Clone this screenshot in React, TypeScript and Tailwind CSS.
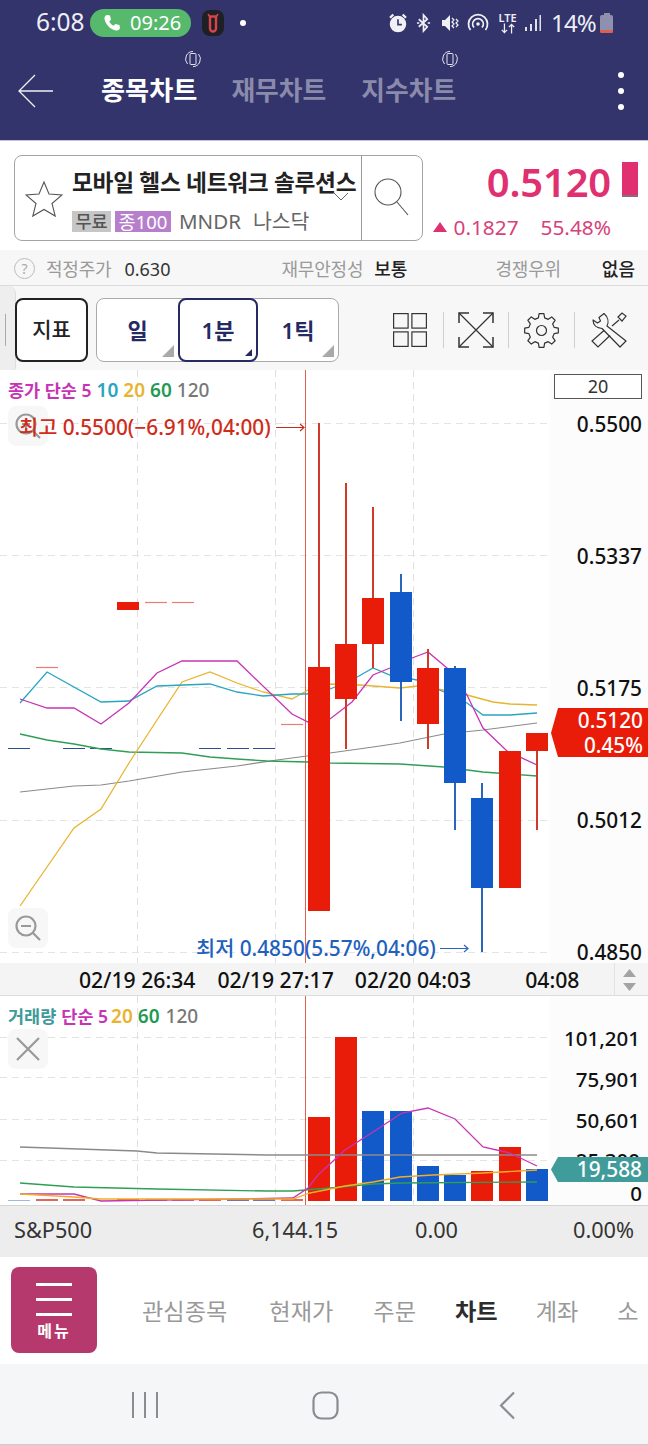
import React from "react";

const FONT = { fontFamily: '"Noto Sans", "Noto Sans CJK KR", sans-serif' };

const candles: { x: number; c: string; wt: number; t: number; b: number; wb: number }[] = [
  { x: 319, c: "#e81c08", wt: 423, t: 667, b: 911, wb: 911 },
  { x: 346, c: "#e81c08", wt: 483, t: 644, b: 699, wb: 749 },
  { x: 373, c: "#e81c08", wt: 507, t: 598, b: 644, wb: 668 },
  { x: 401, c: "#1259c9", wt: 574, t: 592, b: 682, wb: 721 },
  { x: 428, c: "#e81c08", wt: 649, t: 668, b: 724, wb: 749 },
  { x: 455, c: "#1259c9", wt: 666, t: 668, b: 783, wb: 830 },
  { x: 482, c: "#1259c9", wt: 783, t: 798, b: 888, wb: 952 },
  { x: 510, c: "#e81c08", wt: 751, t: 751, b: 888, wb: 888 },
  { x: 537, c: "#e81c08", wt: 733, t: 733, b: 751, wb: 830 },
];

const volBars = [
  { x: 319, c: "#e81c08", t: 1117 },
  { x: 346, c: "#e81c08", t: 1037 },
  { x: 373, c: "#1259c9", t: 1111 },
  { x: 401, c: "#1259c9", t: 1111 },
  { x: 428, c: "#1259c9", t: 1166 },
  { x: 455, c: "#1259c9", t: 1175 },
  { x: 482, c: "#e81c08", t: 1171 },
  { x: 510, c: "#e81c08", t: 1147 },
  { x: 537, c: "#1259c9", t: 1169 },
];

const priceLines = [
  { c: "#8a8a8a", w: 1.2, p: "20,792 74,786 101,785 129,781 182,772 237,766 277,760 307,756 330,753 373,747 400,743 444,734 483,730 537,723" },
  { c: "#2f9e57", w: 1.3, p: "20,734 47,740 74,744 101,749 129,752 182,753 210,757 237,759 267,761 308,762 330,763 400,764 444,767 483,772 537,776" },
  { c: "#e8b430", w: 1.3, p: "20,906 47,867 74,828 101,809 129,763 157,720 182,682 210,672 237,683 263,692 292,699 308,690 330,684 360,685 400,688 417,686 443,690 467,695 493,702 510,704 537,705" },
  { c: "#2aa5c0", w: 1.3, p: "20,703 47,672 101,702 129,701 157,686 210,684 237,692 263,696 292,694 307,694 330,689 352,680 373,668 390,675 417,680 444,692 467,703 483,715 510,715 537,713" },
  { c: "#c733b5", w: 1.3, p: "20,699 47,708 74,708 101,724 129,703 157,673 182,661 237,661 292,714 308,722 330,719 352,702 373,675 390,668 412,658 428,652 447,668 467,695 483,728 507,751 537,765" },
];

const volLines = [
  { c: "#8a8a8a", w: 1.5, p: "20,1147 137,1151 157,1153 267,1155 537,1155" },
  { c: "#2f9e57", w: 1.3, p: "20,1183 74,1187 157,1189 267,1191 293,1191 330,1188 373,1184 400,1183 537,1182" },
  { c: "#c733b5", w: 1.3, p: "20,1194 74,1194 101,1201 293,1198 308,1188 318,1175 345,1150 373,1132 402,1113 428,1108 455,1119 483,1147 510,1153 537,1166" },
  { c: "#f0ae28", w: 1.3, p: "20,1194 74,1197 101,1199 293,1199 310,1193 345,1186 373,1182 400,1177 433,1175 483,1173 537,1170" },
];

function gearPath() {
  const pts: string[] = [];
  const n = 8;
  const cx = 17.5;
  const cy = 17.5;
  for (let i = 0; i < n; i++) {
    const a = (i * 2 * Math.PI) / n - Math.PI / 2;
    const d = Math.PI / n;
    const add = (r: number, t: number) => pts.push(`${(cx + r * Math.cos(t)).toFixed(2)} ${(cy + r * Math.sin(t)).toFixed(2)}`);
    add(13, a - d * 0.62);
    add(17, a - d * 0.36);
    add(17, a + d * 0.36);
    add(13, a + d * 0.62);
  }
  return "M" + pts.join("L") + "Z";
}

function RotateIcon() {
  return (
    <svg width="18" height="18" viewBox="0 0 18 18" fill="none" stroke="#e4e4f0" strokeWidth="1">
      <rect x="6" y="3.500" width="6" height="11" rx="1" />
      <path d="M3.500 14A7.600 7.600 0 0 1 9 1.400M14.500 4A7.600 7.600 0 0 1 9 16.600" />
    </svg>
  );
}

function Corner({ dark }: { dark?: boolean }) {
  return (
    <svg className="absolute bottom-[4px] right-[4px]" width="12" height="12" viewBox="0 0 12 12">
      <path d={dark ? "M12 5V12H5Z" : "M12 0V12H0Z"} fill={dark ? "#262a63" : "#a9a9a9"} />
    </svg>
  );
}

function Sep() {
  return <div className="w-px h-[36px] bg-[#cfcfcf]" />;
}

export default function App() {
  return (
    <div className="w-[648px] h-[1445px] bg-white overflow-hidden flex flex-col" style={FONT}>
      {/* header */}
      <div className="h-[141px] bg-[#33346b] shrink-0 flex flex-col border-b border-[#c3c6d8]">
        <div className="h-[45px] relative flex items-center pl-[36px] pr-[35px] text-[#eeeef5]">
          <span className="text-[24.500px] leading-none w-[54px]">6:08</span>
          <div className="h-[28px] w-[101px] rounded-full bg-[#56b96c] flex items-center pl-[12px] gap-[8px]">
            <svg width="20" height="20" viewBox="0 0 24 24" fill="#ffffff">
              <path d="M6.600 2.500l3 .6 1.300 5-2.200 1.800c1 2.400 2.900 4.300 5.300 5.400l1.900-2.200 5 1.300.6 3c.1 2.300-2.300 4.100-4.600 3.600C10.200 19.700 4.300 13.800 3 7.100 2.500 4.800 4.300 2.400 6.600 2.500z" />
            </svg>
            <span className="text-[20px] leading-none text-white">09:26</span>
          </div>
          <div className="ml-[11px] w-[22px] h-[26px] rounded-[8px] bg-[#1f1f26] flex items-center justify-center">
            <svg width="12" height="20" viewBox="0 0 12 20" fill="none" stroke="#d8444c" strokeWidth="2.400">
              <path d="M3 3.500h6v12a3 3 0 0 1-6 0z" />
              <path d="M1 1l2 3M11 1L9 4" strokeWidth="1.500" />
            </svg>
          </div>
          <div className="ml-[16px] w-[6px] h-[6px] rounded-full bg-white" />
          <div className="ml-auto flex items-center">
            <svg width="20" height="22" viewBox="0 0 18 20" fill="#f0f0f5">
              <circle cx="9" cy="11" r="7.500" />
              <path d="M1 4.500L4 1.500 5.500 3 2.500 6zM17 4.500L14 1.500 12.500 3 15.500 6z" />
              <path d="M9 6.500V11.500H12.500" stroke="#33346b" strokeWidth="1.500" fill="none" />
            </svg>
            <svg className="ml-[8px]" width="15" height="20" viewBox="0 0 16 20" fill="none" stroke="#f0f0f5" strokeWidth="1.800">
              <path d="M3 6l9 8-4 4.500V1.500l4 4.500-9 8" />
              <path d="M1 10h2.500M12.500 10h2.500" />
            </svg>
            <svg className="ml-[10px]" width="18" height="20" viewBox="0 0 18 20" fill="#f0f0f5">
              <path d="M1 7h3l5-5v16l-5-5H1z" />
              <path d="M11 5l2 2-2 2 2 2-2 2 2 2M15 6l2 2-2 2 2 2-2 2" stroke="#f0f0f5" strokeWidth="1.200" fill="none" />
            </svg>
            <svg className="ml-[8px]" width="22" height="20" viewBox="0 0 22 20" fill="none" stroke="#f0f0f5" strokeWidth="1.800">
              <path d="M3.500 17A9.500 9.500 0 1 1 18.500 17" />
              <path d="M7 14.500A5.300 5.300 0 1 1 15 14.500" />
              <circle cx="11" cy="11" r="1.800" fill="#f0f0f5" stroke="none" />
            </svg>
            <div className="ml-[9px] flex flex-col items-center w-[19px]">
              <span className="text-[11px] leading-[11px] font-semibold">LTE</span>
              <svg width="16" height="11" viewBox="0 0 18 11" fill="none" stroke="#f0f0f5" strokeWidth="1.400">
                <path d="M5 0v10M2 7l3 3 3-3M13 11V1M10 4l3-3 3 3" />
              </svg>
            </div>
            <svg className="ml-[8px]" width="16" height="18" viewBox="0 0 16 18" fill="#e0e0ea">
              <rect x="0" y="13" width="2" height="4" />
              <rect x="5" y="10" width="2" height="7" />
              <rect x="10" y="5" width="2" height="12" />
              <rect x="14.500" y="1" width="1.500" height="16" />
            </svg>
            <span className="ml-[10px] text-[24px] leading-none tracking-[-0.8px] w-[45px] whitespace-nowrap">14%</span>
            <div className="ml-[4px] flex flex-col items-center">
              <div className="w-[6px] h-[2px] bg-[#8f90ae]" />
              <div className="relative w-[13px] h-[18px] rounded-[2px] bg-[#8f90ae] overflow-hidden">
                <div className="absolute left-0 right-0 bottom-0 h-[3px] bg-[#e0604f]" />
              </div>
            </div>
          </div>
        </div>
        <div className="relative flex-1">
          <div className="flex items-center h-full pl-[18px] pr-[24px] -mt-[2px]">
            <svg width="36" height="34" viewBox="0 0 36 34" fill="none" stroke="#f0f0f5" strokeWidth="1.300">
              <path d="M17 1L1 17l16 16M1 17h34" />
            </svg>
            <span className="ml-[47px] text-[26.200px] font-bold text-white leading-none whitespace-nowrap">종목차트</span>
            <span className="ml-[34px] text-[25.800px] font-semibold text-[#8a8bab] leading-none whitespace-nowrap">재무차트</span>
            <span className="ml-[35px] text-[25.800px] font-semibold text-[#8a8bab] leading-none whitespace-nowrap">지수차트</span>
            <div className="ml-auto flex flex-col gap-[10px]">
              <div className="w-[6px] h-[6px] rounded-full bg-white" />
              <div className="w-[6px] h-[6px] rounded-full bg-white" />
              <div className="w-[6px] h-[6px] rounded-full bg-white" />
            </div>
          </div>
          <div className="absolute left-[184px] top-[5px]"><RotateIcon /></div>
          <div className="absolute left-[441px] top-[5px]"><RotateIcon /></div>
        </div>
      </div>

      {/* quote */}
      <div className="h-[109px] shrink-0 bg-white flex pl-[14px] pr-[10px] pt-[14px]">
        <div className="w-[409px] h-[86px] shrink-0 rounded-[8px] border border-[#a4a4a4] flex">
          <div className="w-[57px] flex items-center justify-center">
            <svg width="38" height="38" viewBox="0 0 38 38" fill="none" stroke="#555" strokeWidth="1.100" className="mt-[2px]">
              <path d="M19 2l5 12 13 1-10 8.500 3.200 12.500L19 29.500 7.800 36 11 23.500 1 15l13-1z" />
            </svg>
          </div>
          <div className="flex-1 relative pt-[12px] min-w-0">
            <div className="text-[22.700px] leading-[30px] font-bold text-[#222] whitespace-nowrap tracking-[-0.3px]">모바일 헬스 네트워크 솔루션스</div>
            <svg className="absolute right-[12px] top-[36px]" width="16" height="10" viewBox="0 0 16 10" fill="none" stroke="#666" strokeWidth="1">
              <path d="M1 1l7 7 7-7" />
            </svg>
            <div className="flex items-center mt-[12px] h-[22px] whitespace-nowrap">
              <span className="w-[39px] h-[21px] bg-[#c6c6c6] text-[#555] text-[17.500px] leading-[21px] text-center font-medium">무료</span>
              <span className="ml-[4px] w-[56px] h-[21px] bg-[#b77fcb] text-white text-[18.500px] leading-[21px] text-center">종100</span>
              <span className="ml-[8px] text-[#666] text-[20.500px] leading-none">MNDR</span>
              <span className="ml-[12px] text-[#666] text-[20.500px] leading-none">나스닥</span>
            </div>
          </div>
          <div className="w-[61px] shrink-0 border-l border-[#999] flex items-center justify-center">
            <svg width="38" height="44" viewBox="0 0 38 44" fill="none" stroke="#555" strokeWidth="1.100" className="-mt-[2px]">
              <circle cx="15" cy="17" r="13" />
              <path d="M24 27l11 13" />
            </svg>
          </div>
        </div>
        <div className="flex-1 flex flex-col items-end pt-[3px]">
          <div className="flex items-start">
            <span className="text-[40px] leading-[48px] font-semibold text-[#e0306f] tracking-[-0.2px]">0.5120</span>
            <div className="ml-[11px] mt-[4px] w-[16px] h-[35px] bg-[#e0306f] border-b-2 border-[#8c6a78]" />
          </div>
          <div className="flex items-center text-[20.800px] leading-none text-[#d7417a] mt-[11px] mr-[27px] whitespace-nowrap">
            <svg width="14" height="10" viewBox="0 0 14 10" className="mr-[6px]"><path d="M7 0l7 10H0z" fill="#e0306f" /></svg>
            <span>0.1827</span>
            <span className="ml-[22px]">55.48%</span>
          </div>
        </div>
      </div>

      {/* info row */}
      <div className="h-[36px] shrink-0 bg-[#f7f7f7] border-b border-[#dcdcdc] flex items-center pl-[14px] pt-[2px] text-[18px] leading-none whitespace-nowrap">
        <div className="w-[21px] h-[21px] rounded-full border border-[#bbb] text-[#aaa] text-[14px] flex items-center justify-center">?</div>
        <span className="ml-[11px] text-[#9a9a9a] tracking-[-0.2px]">적정주가</span>
        <span className="ml-[13px] text-[#333]">0.630</span>
        <span className="ml-[111px] text-[#9a9a9a] tracking-[-0.2px]">재무안정성</span>
        <span className="ml-[11px] text-[#222] font-medium">보통</span>
        <span className="ml-[88px] text-[#9a9a9a] tracking-[-0.2px]">경쟁우위</span>
        <span className="ml-[41px] text-[#222] font-medium">없음</span>
      </div>

      {/* toolbar */}
      <div className="h-[84px] shrink-0 bg-[#f7f7f7] relative flex items-center pl-[15px] pt-[4px]">
        <div className="absolute left-0 top-0 w-[16px] h-[88px] rounded-r-[8px] bg-[#eeeeee] border-r border-[#dddddd] flex items-center">
          <div className="ml-[5px] w-px h-[32px] bg-[#aaaaaa]" />
        </div>
        <div className="relative w-[73px] h-[64px] rounded-[8px] border-2 border-[#222] bg-white flex items-center justify-center text-[21px] font-medium text-[#222]">지표</div>
        <div className="ml-[8px] w-[243px] h-[64px] rounded-[8px] border border-[#aaaaaa] bg-white flex text-[22px] font-semibold text-[#262a63]">
          <div className="relative w-[81px] flex items-center justify-center">일<Corner /></div>
          <div className="relative w-[80px] flex items-center justify-center border-2 border-[#262a63] rounded-[8px] -my-px">1분<Corner dark /></div>
          <div className="relative flex-1 flex items-center justify-center">1틱<Corner /></div>
        </div>
        <div className="ml-[54px] flex items-center">
          <svg width="34" height="34" viewBox="0 0 34 34" fill="none" stroke="#333" strokeWidth="1.200">
            <rect x="0.600" y="0.600" width="14.500" height="14.500" />
            <rect x="18.900" y="0.600" width="14.500" height="14.500" />
            <rect x="0.600" y="18.900" width="14.500" height="14.500" />
            <rect x="18.900" y="18.900" width="14.500" height="14.500" />
          </svg>
          <div className="ml-[16px]"><Sep /></div>
          <svg className="ml-[14px]" width="36" height="36" viewBox="0 0 36 36" fill="none" stroke="#333" strokeWidth="1.200">
            <path d="M1 11V1h10M25 1h10v10M1 25v10h10M25 35h10V25" strokeWidth="1.500" />
            <path d="M1 1l34 34M35 1L1 35" />
          </svg>
          <div className="ml-[14px]"><Sep /></div>
          <svg className="ml-[15px]" width="35" height="35" viewBox="0 0 35 35" fill="none" stroke="#333" strokeWidth="1.200">
            <path d={gearPath()} strokeLinejoin="round" />
            <circle cx="17.500" cy="17.500" r="5" />
          </svg>
          <div className="ml-[15px]"><Sep /></div>
          <svg className="ml-[16px]" width="36" height="36" viewBox="0 0 36 36" fill="none" stroke="#333" strokeWidth="1.200">
            <path d="M13 1.500L8 5.500L9.500 9L6.500 11L2 8C2 13 6 16 11 16.500L29 35L35 29L16 14C18 10 17 5 13 1.500Z" strokeLinejoin="round" />
            <path d="M13 18.500L1 29L7 35L19 23.500M21 14L28 8" />
            <path d="M27 5L31 1L35 4L31 9Z" />
          </svg>
        </div>
      </div>

      {/* price chart */}
      <div className="relative h-[593px] shrink-0 bg-white">
        <svg className="absolute inset-0" width="648" height="593" viewBox="0 370 648 593">
          <rect x="550" y="370" width="98" height="593" fill="#fcfcfc" />
          {[423, 555, 687, 820, 952].map((y) => (
            <line key={y} x1="0" x2="550" y1={y + 0.5} y2={y + 0.5} stroke="#e4e4e4" strokeWidth="1" strokeDasharray="7 5" />
          ))}
          {[137.5, 275.5, 413.5].map((x) => (
            <line key={x} x1={x} x2={x} y1="370" y2="963" stroke="#e0e0e0" strokeWidth="1" strokeDasharray="7 5" />
          ))}
          <line x1="305.500" x2="305.500" y1="370" y2="963" stroke="#e0604f" strokeWidth="1" />
          {[[36, 667], [145, 602], [172, 602], [281, 724]].map(([x, y]) => (
            <line key={`${x}`} x1={x} x2={x + 22} y1={y + 0.5} y2={y + 0.5} stroke="#e57f72" strokeWidth="1.200" />
          ))}
          {[8, 63, 90, 199, 227, 253].map((x) => (
            <line key={x} x1={x} x2={x + 22} y1="748.500" y2="748.500" stroke="#2d4f8f" strokeWidth="1" />
          ))}
          <rect x="117" y="602" width="22" height="8" fill="#e81c08" />
          {priceLines.map((l) => (
            <polyline key={l.c} points={l.p} fill="none" stroke={l.c} strokeWidth={l.w} />
          ))}
          {candles.map((c) => (
            <g key={c.x}>
              <line x1={c.x} x2={c.x} y1={c.wt} y2={c.wb} stroke={c.c === "#e81c08" ? "#d03a28" : "#2b66bd"} strokeWidth="2" />
              <rect x={c.x - 11} y={c.t} width="22" height={c.b - c.t} fill={c.c} />
            </g>
          ))}
          <path d="M276 427.500h28M300 424l4 3.500-4 3.500" fill="none" stroke="#c92a1a" strokeWidth="1.200" />
          <path d="M440 948.500h28M464 945l4 3.500-4 3.500" fill="none" stroke="#2b66bd" strokeWidth="1.200" />
          <path d="M558 708H648V757H558L551 733Z" fill="#e81c08" />
        </svg>

        <div className="absolute left-[8px] top-[10px] text-[17.500px] leading-[20px] font-semibold whitespace-nowrap flex items-baseline gap-[5px]">
          <span className="text-[#c733b5]">종가 단순 5</span>
          <span className="text-[19px] text-[#2aa5c0]">10</span>
          <span className="text-[19px] text-[#e8b430]">20</span>
          <span className="text-[19px] text-[#1f9a54]">60</span>
          <span className="text-[19px] text-[#777] font-medium">120</span>
        </div>
        <div className="absolute left-[554px] top-[4px] w-[88px] h-[25px] border border-[#555] bg-white text-[18px] leading-[23px] text-center text-[#333]">20</div>

        <div className="absolute left-[8px] top-[36px] w-[40px] h-[40px] rounded-[8px] bg-[#f7f7f7] flex items-center justify-center">
          <svg width="28" height="28" viewBox="0 0 28 28" fill="none" stroke="#999" strokeWidth="2.200">
            <circle cx="12" cy="12" r="9.500" />
            <path d="M19 19l7 7M8 12h8M12 8v8" />
          </svg>
        </div>
        <div className="absolute left-[8px] top-[538px] w-[40px] h-[40px] rounded-[8px] bg-[#f7f7f7] flex items-center justify-center">
          <svg width="28" height="28" viewBox="0 0 28 28" fill="none" stroke="#999" strokeWidth="2.200">
            <circle cx="12" cy="12" r="9.500" />
            <path d="M19 19l7 7M7 12h10" />
          </svg>
        </div>

        <div className="absolute left-[19px] top-[44px] text-[20.800px] leading-[26px] font-medium text-[#cf2c1a] whitespace-nowrap">최고 0.5500(−6.91%,04:00)</div>
        <div className="absolute left-[196px] top-[565px] text-[20.800px] leading-[26px] font-medium text-[#2160bd] whitespace-nowrap">최저 0.4850(5.57%,04:06)</div>

        <div className="absolute right-[6px] top-[43px] text-[20.800px] leading-[22px] font-medium text-[#111]">0.5500</div>
        <div className="absolute right-[6px] top-[175px] text-[20.800px] leading-[22px] font-medium text-[#111]">0.5337</div>
        <div className="absolute right-[6px] top-[307px] text-[20.800px] leading-[22px] font-medium text-[#111]">0.5175</div>
        <div className="absolute right-[6px] top-[439px] text-[20.800px] leading-[22px] font-medium text-[#111]">0.5012</div>
        <div className="absolute right-[6px] top-[571px] text-[20.800px] leading-[22px] font-medium text-[#111]">0.4850</div>
        <div className="absolute right-[5px] top-[338px] text-[20.800px] leading-[25px] font-medium text-white text-right">
          <div>0.5120</div>
          <div>0.45%</div>
        </div>
      </div>

      {/* date axis */}
      <div className="relative h-[33px] shrink-0 bg-[#f4f4f4] border-b border-[#dddddd] text-[21.200px] leading-none font-medium text-[#111] flex items-center whitespace-nowrap pl-[79px] pt-[2px]">
        <span>02/19 26:34</span>
        <span className="ml-[22px]">02/19 27:17</span>
        <span className="ml-[21px]">02/20 04:03</span>
        <span className="ml-[54px]">04:08</span>
        <div className="absolute right-[33px] top-0 bottom-0 w-px bg-[#e2e2e2]" />
        <svg className="absolute right-[12px] top-[6px]" width="13" height="22" viewBox="0 0 13 22" fill="#a3a3a3">
          <path d="M6.500 0L13 8H0zM0 14h13l-6.500 8z" />
        </svg>
      </div>

      {/* volume chart */}
      <div className="relative h-[209px] shrink-0 bg-white">
        <svg className="absolute inset-0" width="648" height="209" viewBox="0 996 648 209">
          <rect x="550" y="996" width="98" height="209" fill="#fcfcfc" />
          {[1037, 1077, 1119, 1160].map((y) => (
            <line key={y} x1="0" x2="550" y1={y + 0.5} y2={y + 0.5} stroke="#e4e4e4" strokeWidth="1" strokeDasharray="7 5" />
          ))}
          {[137.5, 275.5, 413.5].map((x) => (
            <line key={x} x1={x} x2={x} y1="996" y2="1205" stroke="#e0e0e0" strokeWidth="1" strokeDasharray="7 5" />
          ))}
          <line x1="305.500" x2="305.500" y1="996" y2="1205" stroke="#e0604f" strokeWidth="1" />
          {[[36, "#e2655a"], [63, "#e2655a"], [117, "#e81c08"], [145, "#c86bb0"], [172, "#c86bb0"], [199, "#e2655a"], [227, "#7070c0"], [253, "#7070c0"], [281, "#e2655a"]].map(([x, c]) => (
            <rect key={`${x}`} x={x as number} y="1199" width="22" height="2" fill={c as string} />
          ))}
          <rect x="8" y="1200" width="22" height="1" fill="#9fb8e0" />
          {volBars.map((b) => (
            <rect key={b.x} x={b.x - 11} y={b.t} width="22" height={1201 - b.t} fill={b.c} />
          ))}
          {volLines.map((l) => (
            <polyline key={l.c} points={l.p} fill="none" stroke={l.c} strokeWidth={l.w} />
          ))}
        </svg>
        <div className="absolute left-[8px] top-[10px] text-[17.500px] leading-[20px] font-semibold whitespace-nowrap flex items-baseline gap-[5px]">
          <span className="text-[#3f9a9a]">거래량</span>
          <span className="text-[#c733b5]">단순 5</span>
          <span className="-ml-[2px] text-[19px] text-[#e8b430]">20</span>
          <span className="text-[19px] text-[#1f9a54]">60</span>
          <span className="ml-[1px] text-[19px] text-[#777] font-medium">120</span>
        </div>
        <div className="absolute left-[8px] top-[33px] w-[40px] h-[40px] rounded-[8px] bg-[#f7f7f7] flex items-center justify-center">
          <svg width="24" height="24" viewBox="0 0 24 24" fill="none" stroke="#999" strokeWidth="2.200">
            <path d="M1 1l22 22M23 1L1 23" />
          </svg>
        </div>
        <div className="absolute right-[8px] top-[31px] text-[20.500px] leading-[22px] font-medium text-[#111]">101,201</div>
        <div className="absolute right-[8px] top-[72px] text-[20.500px] leading-[22px] font-medium text-[#111]">75,901</div>
        <div className="absolute right-[8px] top-[113px] text-[20.500px] leading-[22px] font-medium text-[#111]">50,601</div>
        <div className="absolute right-[8px] top-[153px] text-[20.500px] leading-[22px] font-medium text-[#111]">25,300</div>
        <svg className="absolute left-[551px] top-[161px]" width="97" height="25" viewBox="0 0 97 25">
          <path d="M7 0H97V25H7L0 12.500Z" fill="#3f9c9a" />
        </svg>
        <div className="absolute right-[6px] top-[161px] text-[20.800px] leading-[25px] font-medium text-white">19,588</div>
        <div className="absolute right-[6px] top-[186px] text-[20.500px] leading-[22px] font-medium text-[#111]">0</div>
      </div>

      {/* index band */}
      <div className="relative h-[52px] shrink-0 bg-[#ededed] border-t border-[#d5d5d5] text-[21.700px] leading-none text-[#333] flex items-center whitespace-nowrap pl-[14px] pb-[4px]">
        <span className="w-[238px]">S&amp;P500</span>
        <span className="w-[163px]">6,144.15</span>
        <span className="w-[158px]">0.00</span>
        <span>0.00%</span>
      </div>

      {/* bottom tabs */}
      <div className="h-[107px] shrink-0 bg-white flex items-center pl-[11px] pb-[1px] whitespace-nowrap overflow-hidden">
        <div className="w-[86px] h-[86px] rounded-[8px] bg-[#b5396d] flex flex-col items-center pt-[16px] shrink-0">
          <div className="w-[36px] h-[3px] bg-white" />
          <div className="w-[36px] h-[3px] bg-white mt-[12px]" />
          <div className="w-[36px] h-[3px] bg-white mt-[12px]" />
          <span className="text-[16px] leading-none font-bold text-white mt-[7px] tracking-[2px]">메뉴</span>
        </div>
        <div className="flex items-center text-[23.200px] leading-none text-[#999] ml-[45px] mt-[3px]">
          <span>관심종목</span>
          <span className="ml-[42px]">현재가</span>
          <span className="ml-[40px]">주문</span>
          <span className="ml-[39px] font-bold text-[#2c2c2c]">차트</span>
          <span className="ml-[38px]">계좌</span>
          <span className="ml-[39px]">소</span>
        </div>
      </div>

      {/* system nav */}
      <div className="flex-1 bg-[#f5f6f8] border-b border-[#cccccc] relative">
        <svg className="absolute left-[131px] top-[27px]" width="28" height="28" viewBox="0 0 28 28" stroke="#8a8c90" strokeWidth="2">
          <path d="M2 1v26M14 1v26M26 1v26" />
        </svg>
        <svg className="absolute left-[312px] top-[27px]" width="27" height="29" viewBox="0 0 27 29" fill="none" stroke="#8a8c90" strokeWidth="2.200">
          <rect x="1.500" y="1.500" width="24" height="26" rx="8" />
        </svg>
        <svg className="absolute left-[499px] top-[27px]" width="17" height="29" viewBox="0 0 17 29" fill="none" stroke="#8a8c90" strokeWidth="2.200">
          <path d="M15 1.500L2 14.500l13 13" />
        </svg>
      </div>
    </div>
  );
}
